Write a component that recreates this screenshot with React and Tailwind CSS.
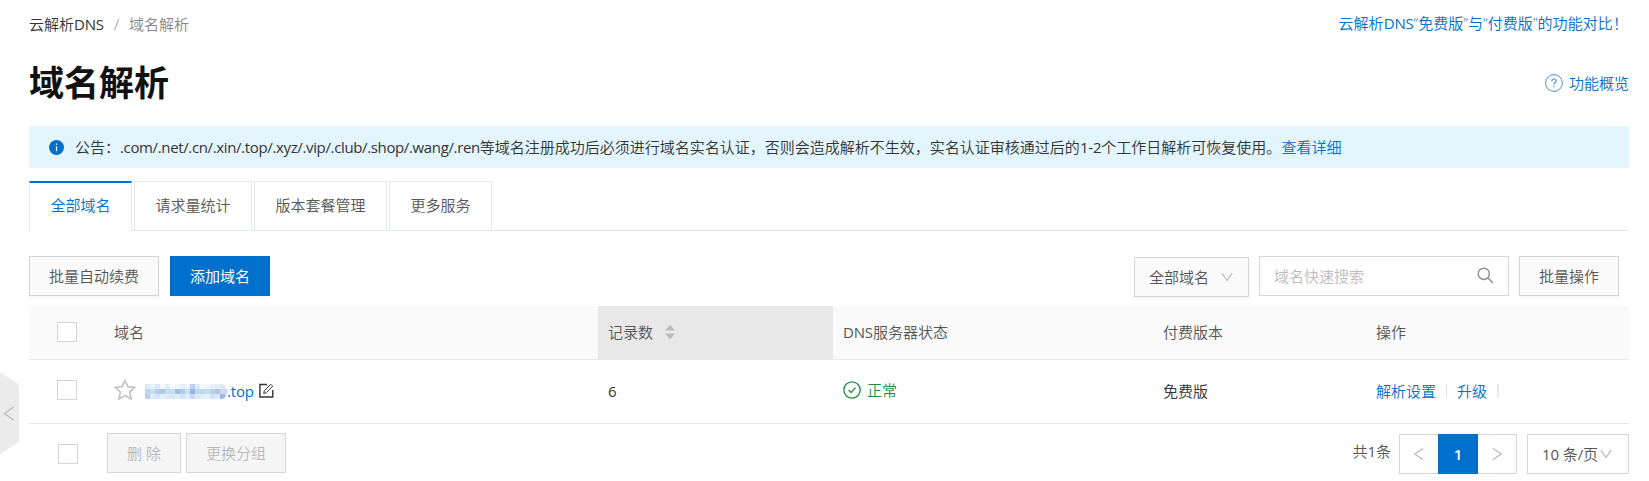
const FONT = "font-['Open_Sans','Noto_Sans_CJK_SC',sans-serif]";

const MOSAIC = [
  ['#dfecf8', '#e9f1fa', '#dcebf7', '#f2f7fc', '#e4eef9', '#f4f8fd', '#eff5fb', '#e4effa', '#ebf2fb', '#bfd0ef', '#deebf8', '#f4f8fd', '#eff6fb', '#e8f0fa', '#e4eef9', '#d8e8f6', '#e4f0fa'],
  ['#bfd4ef', '#cfdff3', '#b3ccec', '#adcaec', '#c8daf1', '#c2dff1', '#9dbfe7', '#a9cfec', '#cfdff3', '#9bb4e2', '#bedbf0', '#c0d9f0', '#c8def2', '#b8d3ee', '#babfe4', '#cfd9f1', '#b9dcf0'],
  ['#b6d0ed', '#dfecf8', '#d6e4f5', '#e4eef9', '#dfe8f7', '#d6e7f6', '#dfecf8', '#d3e4f5', '#e2ebf8', '#ccddf3', '#deeaf8', '#e2edf8', '#e8f0fa', '#d3e4f5', '#dfe8f7', '#98b9e5', '#cfe6f6'],
];

function Mosaic() {
  return (
    <svg width="82" height="15" viewBox="0 0 82 15" shapeRendering="crispEdges" className="shrink-0 rounded-r-[6px] rounded-l-[1px]">
      {MOSAIC.map((row, y) =>
        row.map((fill, x) => (
          <rect key={`${x}-${y}`} x={x * 5} y={y * 5} width={x === 16 ? 2 : 5} height="5" fill={fill} />
        ))
      )}
    </svg>
  );
}

function Chevron({ dir = 'down', className = '' }) {
  const d = { down: 'M.8 2.200l5.200 7.300 5.200-7.300', left: 'M10 .5L1.700 6l8.300 5.500', right: 'M2 .5L10.300 6 2 11.500' }[dir];
  return (
    <svg width="12" height="12" viewBox="0 0 12 12" fill="none" stroke="#b8b8b8" strokeWidth="1.200" className={`shrink-0 ${className}`}>
      <path d={d} />
    </svg>
  );
}

const Latin = ({ children }) => <span className="font-normal tracking-[-0.17px]">{children}</span>;

const Checkbox = () => <span className="block size-5 shrink-0 border border-[#d4d4d4] bg-white" />;

function Button({ className = '', children }) {
  return (
    <button className={`flex h-10 shrink-0 items-center justify-center border pb-px shadow-[0_2px_1px_rgba(0,0,0,0.03)] ${className}`}>
      {children}
    </button>
  );
}

function Tab({ className, children }) {
  return (
    <div className={`flex h-[50px] shrink-0 items-center justify-center border-x border-t border-[#e5e9ed] bg-white pb-[2px] ${className}`}>
      {children}
    </div>
  );
}

const GRID = 'grid grid-cols-[75px_494px_235px_320px_213px_263px]';

export default function App() {
  return (
    <div className={`relative h-[481px] w-[1649px] overflow-hidden bg-white pl-[29px] text-[15px] leading-5 font-[350] text-[#333] ${FONT}`}>
      <div className="w-[1600px]">
        <div className="flex h-[48px] items-center justify-between pr-px">
          <div className="flex items-center">
            <span className="w-[75px] whitespace-nowrap">云解析<Latin>DNS</Latin></span>
            <span className="w-[25px] pl-[10px] text-[#888]">/</span>
            <span className="text-[#888]">域名解析</span>
          </div>
          <a className="pb-[2px] tracking-[0.08px] text-[#0070cc]">云解析<Latin>DNS</Latin>“免费版”与“付费版”的功能对比！</a>
        </div>
        <div className="flex h-[78px] items-center justify-between pb-[8px]">
          <h1 className="text-[35px] leading-10 font-bold text-[#111]">域名解析</h1>
          <a className="flex items-center gap-[6px] text-[#0070cc]">
            <svg width="18" height="18" viewBox="0 0 18 18" fill="none" stroke="#4b8fd6" strokeWidth="1">
              <circle cx="9" cy="9" r="8.4" />
              <path d="M6.8 7.2c0-3 4.4-2.8 4.4-.2 0 1.600-2.200 1.600-2.200 3.500M9 12v1.300" strokeWidth="1.200" />
            </svg>
            功能概览
          </a>
        </div>

        <div className="flex h-[42px] items-center bg-[#e3f6ff] pl-5">
          <svg width="15" height="15" viewBox="0 0 15 15" className="mr-[11px]">
            <circle cx="7.500" cy="7.500" r="7.500" fill="#0070cc" />
            <path d="M7.500 6.300v5M7.500 3.600v1.200" stroke="#fff" strokeWidth="1.200" />
          </svg>
          <span className="whitespace-nowrap">
            公告：<span className="font-normal tracking-[-0.36px]">.com/.net/.cn/.xin/.top/.xyz/.vip/.club/.shop/.wang/.ren</span>
            等域名注册成功后必须进行域名实名认证，否则会造成解析不生效，实名认证审核通过后的<Latin>1-2</Latin>个工作日解析可恢复使用。
            <a className="text-[#0070cc]">查看详细</a>
          </span>
        </div>

        <div className="mt-[13px] flex h-[50px] gap-[2px] bg-[linear-gradient(#e1e6eb,#e1e6eb)] bg-[length:100%_1px] bg-bottom bg-no-repeat text-[#555]">
          <div className="flex h-[50px] w-[103px] shrink-0 items-center justify-center border-x border-t-2 border-x-[#e5e9ed] border-t-[#0070cc] bg-white pb-[4px] text-[#0070cc]">
            全部域名
          </div>
          <Tab className="w-[118px] border-b">请求量统计</Tab>
          <Tab className="w-[133px] border-b">版本套餐管理</Tab>
          <Tab className="w-[103px] border-b">更多服务</Tab>
        </div>

        <div className="flex h-[75px] items-start pt-[25px] text-[#555]">
          <Button className="w-[130px] border-[#d6d6d6] bg-[#fafafa]">批量自动续费</Button>
          <Button className="ml-[11px] w-[100px] border-[#0070cc] bg-[#0070cc] font-normal text-white">添加域名</Button>
          <Button className="mt-px mr-[10px] ml-auto w-[115px] border-[#d6d6d6] bg-[#fafafa]">
            全部域名
            <Chevron className="mr-px ml-[12px]" />
          </Button>
          <div className="mr-[10px] flex h-10 w-[250px] items-center justify-between border border-[#d6d6d6] pr-[14px] pb-px pl-[14px] text-[#bbb]">
            域名快速搜索
            <svg width="17" height="17" viewBox="0 0 17 17" fill="none" stroke="#8f8f8f" strokeWidth="1.500" className="mb-px">
              <circle cx="6.800" cy="6.800" r="5.600" />
              <path d="M10.800 10.800l5.200 5.200" />
            </svg>
          </div>
          <Button className="mr-[10px] w-[100px] border-[#d6d6d6] bg-[#fafafa]">批量操作</Button>
        </div>

        <div className={`${GRID} h-[54px] border-b border-[#e8e8e8] bg-[#fafafa] text-[#555]`}>
          <div className="flex items-center pb-px pl-7"><Checkbox /></div>
          <div className="flex items-center pb-[2px] pl-[10px]">域名</div>
          <div className="flex items-center bg-[#e8e8e8] pb-[2px] pl-[10px]">
            记录数
            <svg width="10" height="16" viewBox="0 0 10 16" fill="#bbb" className="mt-px ml-[12px]">
              <path d="M5 1l5 5.500H0zM5 15.500L0 9.500h10z" />
            </svg>
          </div>
          <div className="flex items-center pb-[2px] pl-[10px]"><Latin>DNS</Latin>服务器状态</div>
          <div className="flex items-center pb-[2px] pl-[10px]">付费版本</div>
          <div className="flex items-center pb-[2px] pl-[10px]">操作</div>
        </div>

        <div className={`${GRID} h-[64px] border-b border-[#e8e8e8]`}>
          <div className="flex items-center pb-[3px] pl-7"><Checkbox /></div>
          <div className="flex items-center pb-[2px] pl-[10px]">
            <svg width="22" height="21" viewBox="0 0 22 21" fill="none" stroke="#c4c4c4" strokeWidth="1.700" className="mr-[9px] mb-[2px]">
              <path d="M11 1.500l2.800 6.200 7 .8-5.200 4.600 1.500 6.900L11 16.500 4.900 20l1.500-6.900L1.200 8.500l7-.8z" />
            </svg>
            <div className="pt-[2px]"><Mosaic /></div>
            <span className="text-[#0070cc]"><Latin>.top</Latin></span>
            <svg width="15" height="15" viewBox="0 0 15 15" fill="none" stroke="#333" strokeWidth="1.400" className="ml-[5px]">
              <path d="M8 1.500H.9v12.500h12.900V7" />
              <path d="M4.700 10.500l.6-2.700 6.500-6.500 1.900 1.900-6.500 6.500z" strokeWidth="1" />
            </svg>
          </div>
          <div className="flex items-center pb-[2px] pl-[10px]"><Latin>6</Latin></div>
          <div className="flex items-center gap-[6px] pb-[4px] pl-[10px] text-[#1e8e3e]">
            <svg width="18" height="18" viewBox="0 0 18 18" fill="none" stroke="#1e8e3e" strokeWidth="1.300">
              <circle cx="9" cy="9" r="8.200" />
              <path d="M5.500 9l2.600 2.500 4.400-4.900" />
            </svg>
            正常
          </div>
          <div className="flex items-center pb-[2px] pl-[10px]">免费版</div>
          <div className="flex items-center pb-[2px] pl-[10px] text-[#0070cc]">
            解析设置
            <span className="mx-[10px] h-[14px] w-px bg-[#dfe5ea]" />
            升级
            <span className="ml-[10px] h-[14px] w-[2px] bg-[#e3e8ec]" />
          </div>
        </div>

        <div className="flex h-[57px] items-start pt-[9px] text-[#555]">
          <div className="mt-[11px] ml-[29px]"><Checkbox /></div>
          <Button className="ml-[29px] w-[74px] border-[#d6d6d6] bg-[#f5f5f5] text-[#b8b8b8] shadow-none">删 除</Button>
          <Button className="ml-[5px] w-[100px] border-[#d6d6d6] bg-[#f5f5f5] text-[#b8b8b8] shadow-none">更换分组</Button>
          <span className="mt-[8px] mr-[8px] ml-auto">共<Latin>1</Latin>条</span>
          <div className="mt-px flex h-10 w-[118px] shrink-0">
            <div className="flex w-[39px] items-center justify-center border border-r-0 border-[#d6d6d6]"><Chevron dir="left" /></div>
            <div className="flex w-[40px] items-center justify-center bg-[#0070cc] pb-px font-semibold text-white">1</div>
            <div className="flex w-[39px] items-center justify-center border border-l-0 border-[#d6d6d6]"><Chevron dir="right" /></div>
          </div>
          <div className="mt-px ml-[10px] flex h-10 w-[102px] shrink-0 items-center border border-[#d6d6d6] pb-px pl-[14px] whitespace-nowrap">
            <span><Latin>10</Latin> 条<Latin>/</Latin>页</span>
            <Chevron className="ml-[2px]" />
          </div>
        </div>
      </div>

      <svg width="19" height="82" viewBox="0 0 19 82" className="absolute top-[372px] left-0">
        <path d="M0 0L16.500 10.500Q19 12 19 15V67Q19 70 16.500 71.500L0 82z" fill="#ebebeb" />
        <path d="M13.500 35L4.500 41.500l9 6.500" fill="none" stroke="#bbb" strokeWidth="1.300" />
      </svg>
    </div>
  );
}
